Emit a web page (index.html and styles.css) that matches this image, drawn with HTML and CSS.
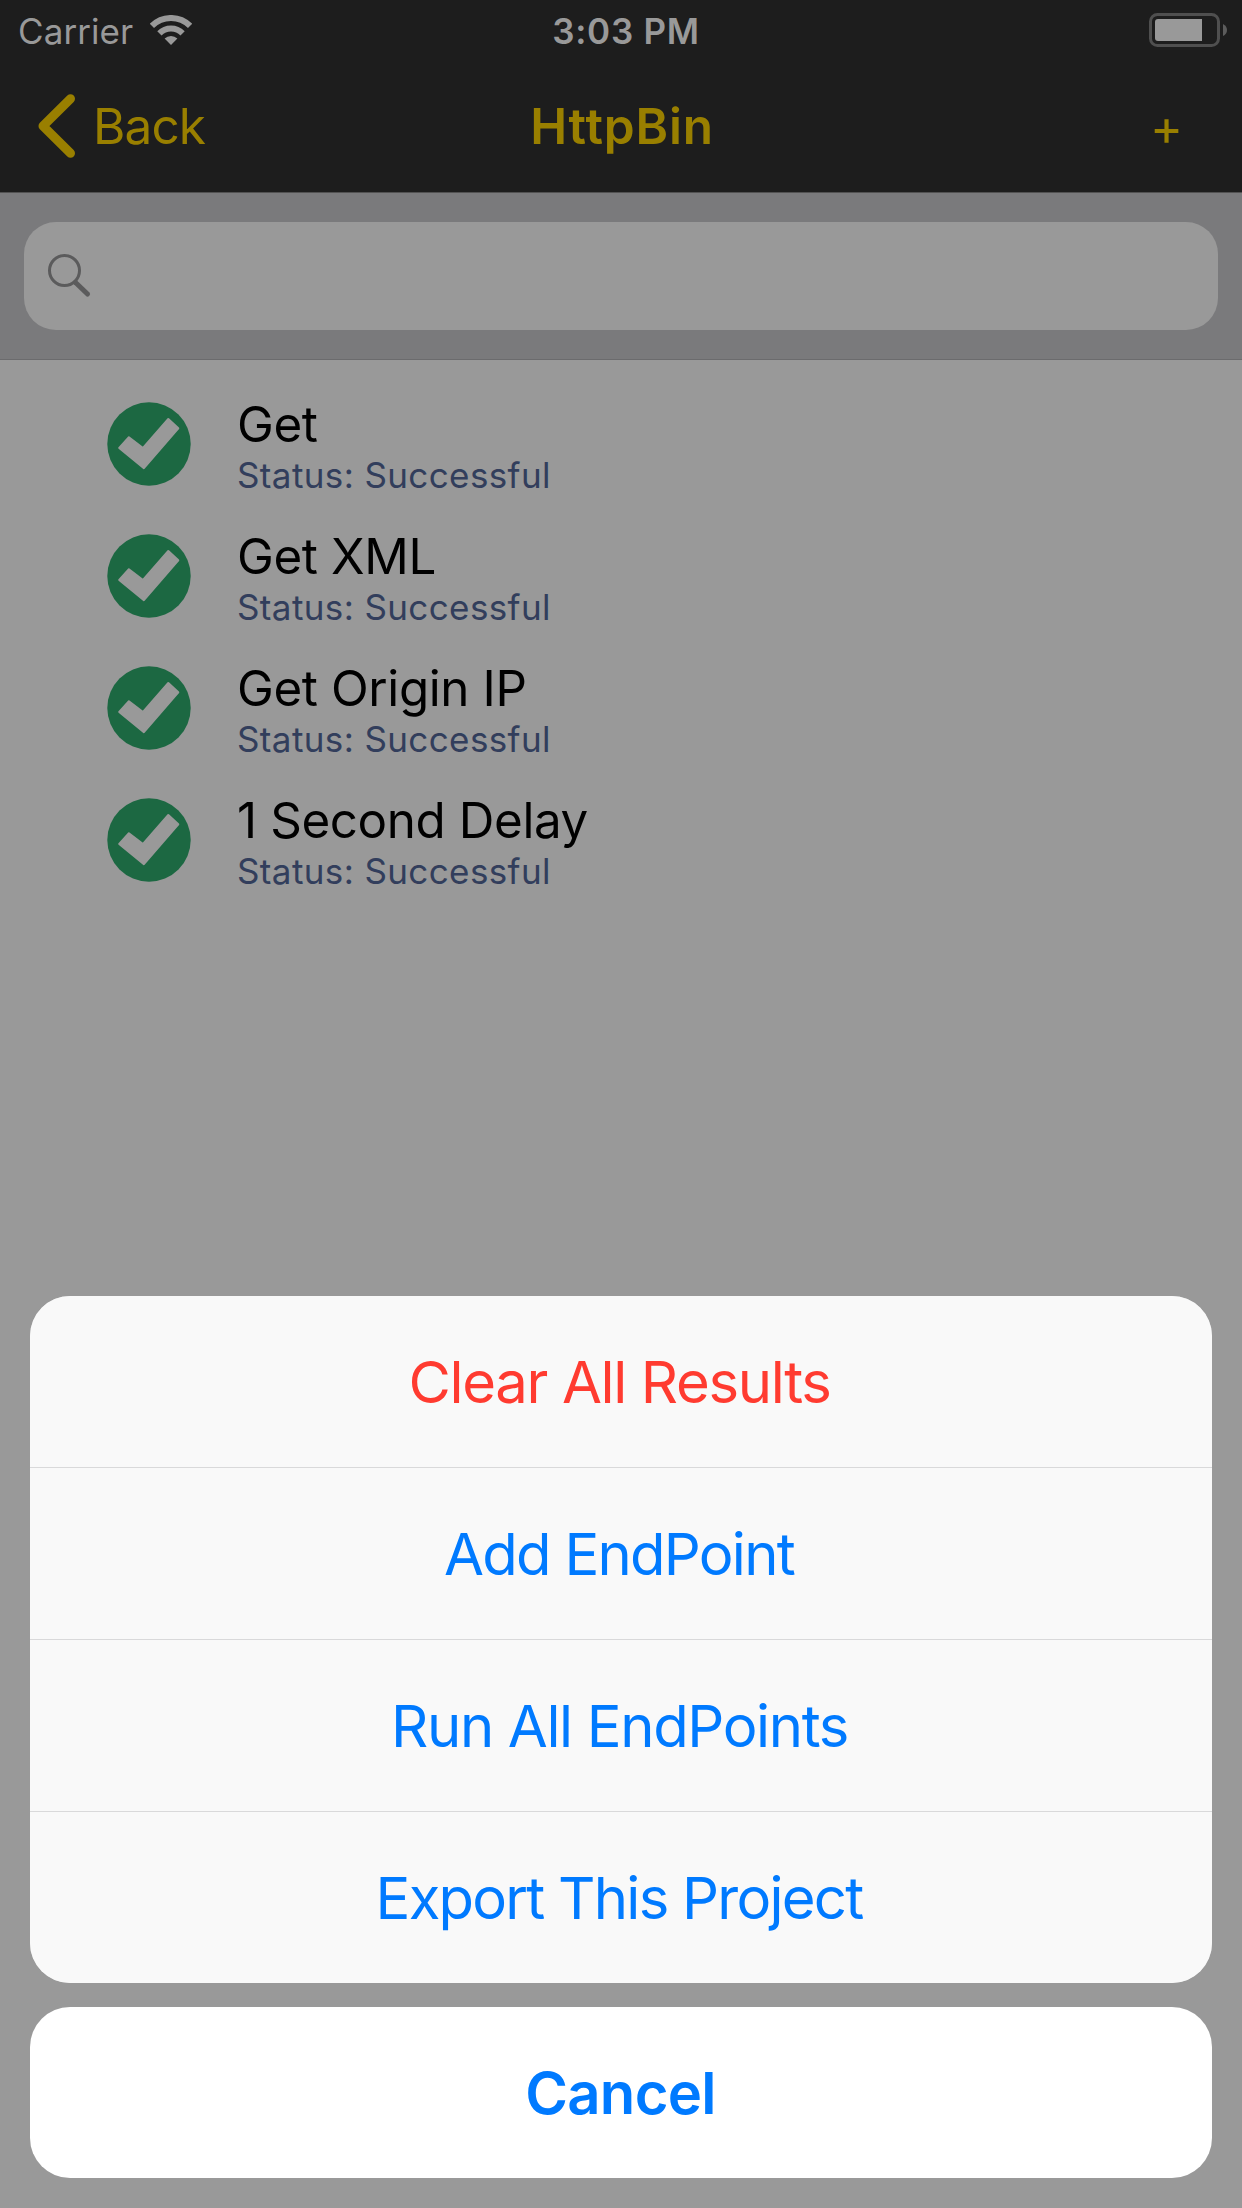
FILE: index.html
```
<!DOCTYPE html>
<html lang="en">
<head>
<meta charset="utf-8">
<title>HttpBin</title>
<link rel="stylesheet" href="styles.css">
</head>
<body>
<div class="screen">
  <header class="header">
    <div class="status-bar">
      <div class="status-left">
        <span class="carrier">Carrier</span>
        <svg class="wifi" width="42" height="30" viewBox="0 0 42 30" fill="none">
          <path d="M1.9 10.9A27 27 0 0 1 40.1 10.9" stroke="#999" stroke-width="6"/>
          <path d="M9.4 18.4A16.4 16.4 0 0 1 32.6 18.4" stroke="#999" stroke-width="6"/>
          <path d="M21 30L14.6 23.6A9.1 9.1 0 0 1 27.4 23.6Z" fill="#999"/>
        </svg>
      </div>
      <span class="clock">3:03 PM</span>
      <svg class="battery" width="78" height="34" viewBox="0 0 78 34">
        <rect x="1.5" y="1.5" width="68" height="31" rx="7" fill="none" stroke="#4f4f4f" stroke-width="3"/>
        <path d="M9 6H53V28H9Q6 28 6 25V9Q6 6 9 6Z" fill="#999"/>
        <path d="M74 11Q78 13 78 17T74 23Z" fill="#5c5c5c"/>
      </svg>
    </div>
    <nav class="nav">
      <div class="back">
        <svg class="chevron" width="37" height="64" viewBox="0 0 37 64" fill="none">
          <path d="M32.5 4.7L5 32L32.5 59.3" stroke="#997f00" stroke-width="9" stroke-linecap="round" stroke-linejoin="round"/>
        </svg>
        <span class="back-label">Back</span>
      </div>
      <h1 class="title">HttpBin</h1>
      <span class="add">+</span>
    </nav>
  </header>
  <div class="search-bar">
    <div class="search-field">
      <svg width="44" height="44" viewBox="0 0 44 44" fill="none" stroke="#5b5b5c">
        <circle cx="16.5" cy="16.5" r="15" stroke-width="3"/>
        <path d="M27.5 28.5L39.5 40" stroke-width="5" stroke-linecap="round"/>
      </svg>
    </div>
  </div>
  <main class="list">
    <div class="row">
      <svg class="check" width="84" height="84" viewBox="0 0 84 84"><circle cx="42" cy="42" r="41.7" fill="#1c6842"/><path d="M61.3 17L71.3 26.3L36.9 66.2L12.2 46L21.9 35.2L36 46Z" fill="#999" stroke="#999" stroke-width="2" stroke-linejoin="round"/></svg>
      <div class="info"><div class="name name-get">Get</div><div class="state">Status: Successful</div></div>
    </div>
    <div class="row">
      <svg class="check" width="84" height="84" viewBox="0 0 84 84"><circle cx="42" cy="42" r="41.7" fill="#1c6842"/><path d="M61.3 17L71.3 26.3L36.9 66.2L12.2 46L21.9 35.2L36 46Z" fill="#999" stroke="#999" stroke-width="2" stroke-linejoin="round"/></svg>
      <div class="info"><div class="name">Get XML</div><div class="state">Status: Successful</div></div>
    </div>
    <div class="row">
      <svg class="check" width="84" height="84" viewBox="0 0 84 84"><circle cx="42" cy="42" r="41.7" fill="#1c6842"/><path d="M61.3 17L71.3 26.3L36.9 66.2L12.2 46L21.9 35.2L36 46Z" fill="#999" stroke="#999" stroke-width="2" stroke-linejoin="round"/></svg>
      <div class="info"><div class="name">Get Origin IP</div><div class="state">Status: Successful</div></div>
    </div>
    <div class="row">
      <svg class="check" width="84" height="84" viewBox="0 0 84 84"><circle cx="42" cy="42" r="41.7" fill="#1c6842"/><path d="M61.3 17L71.3 26.3L36.9 66.2L12.2 46L21.9 35.2L36 46Z" fill="#999" stroke="#999" stroke-width="2" stroke-linejoin="round"/></svg>
      <div class="info"><div class="name">1 Second Delay</div><div class="state">Status: Successful</div></div>
    </div>
  </main>
  <div class="sheet">
    <div class="actions">
      <button class="action destructive">Clear All Results</button>
      <button class="action tight">Add EndPoint</button>
      <button class="action">Run All EndPoints</button>
      <button class="action tight">Export This Project</button>
    </div>
    <button class="action cancel">Cancel</button>
  </div>
</div>
</body>
</html>
```
FILE: styles.css
```
* { box-sizing: border-box; }

body {
  margin: 0;
  background: #999;
  font-family: Inter, "Liberation Sans", sans-serif;
}

.screen {
  width: 1242px;
  height: 2208px;
  display: flex;
  flex-direction: column;
  overflow: hidden;
  background: #999;
}

svg { display: block; flex: none; }

/* Status and navigation bars */
.header {
  height: 193px;
  background: #1d1d1d;
  border-bottom: 1px solid #525252;
}

.status-bar {
  height: 62px;
  padding: 0 8px 0 18px;
  display: grid;
  grid-template-columns: 1fr auto 1fr;
  align-items: center;
  font-size: 35px;
  line-height: 62px;
  color: #999;
}

.status-left { display: flex; align-items: center; gap: 17px; }
.carrier { letter-spacing: 0.08px; }
.wifi { margin-top: -2px; }
.clock { font-weight: 600; letter-spacing: 0.75px; }
.battery { justify-self: end; margin-right: 7px; margin-top: -2px; }

.nav {
  height: 130px;
  padding: 0 59px 2px 38px;
  display: grid;
  grid-template-columns: 1fr auto 1fr;
  align-items: center;
  font-size: 49.5px;
  line-height: 60px;
  color: #997f00;
}

.back { display: flex; align-items: center; gap: 18px; }
.back-label { letter-spacing: -0.9px; }

.title {
  margin: 0 0 0 23px;
  font-size: inherit;
  font-weight: 600;
  letter-spacing: 0.85px;
}

.add { justify-self: end; padding-top: 2px; font-size: 50px; }

/* Search */
.search-bar {
  height: 167px;
  padding: 29px 24px;
  background: #7a7a7c;
  border-bottom: 1px solid #6b6b6d;
}

.search-field {
  height: 108px;
  padding: 32px 24px;
  border-radius: 32px;
  background: #999;
}

/* Endpoint list */
.list {
  flex: 1;
  padding: 19px 0 0 107px;
}

.row {
  height: 132px;
  display: flex;
  align-items: center;
  gap: 46px;
}

.check { margin-top: -2px; }

.name {
  font-size: 49.3px;
  line-height: 60px;
  letter-spacing: -0.37px;
  color: #000;
}

.name-get { letter-spacing: -0.4px; }

.state {
  font-size: 35px;
  line-height: 42px;
  letter-spacing: 0.39px;
  color: #323e5c;
}

/* Action sheet */
.sheet {
  padding: 0 30px 30px;
  display: flex;
  flex-direction: column;
  gap: 24px;
}

.actions {
  display: flex;
  flex-direction: column;
  gap: 1px;
  border-radius: 40px;
  overflow: hidden;
  background: #d9d9da;
}

.action {
  height: 171px;
  padding: 2px 3px 0 0;
  border: 0;
  background: #f9f9f9;
  font: 400 58px/169px Inter, "Liberation Sans", sans-serif;
  letter-spacing: -1.36px;
  text-align: center;
  color: #007aff;
}

.tight { padding-right: 4px; letter-spacing: -1.75px; }
.destructive { color: #ff3b30; }

.cancel {
  padding-right: 1px;
  border-radius: 40px;
  background: #fff;
  font-weight: 600;
  letter-spacing: -0.72px;
}
```
